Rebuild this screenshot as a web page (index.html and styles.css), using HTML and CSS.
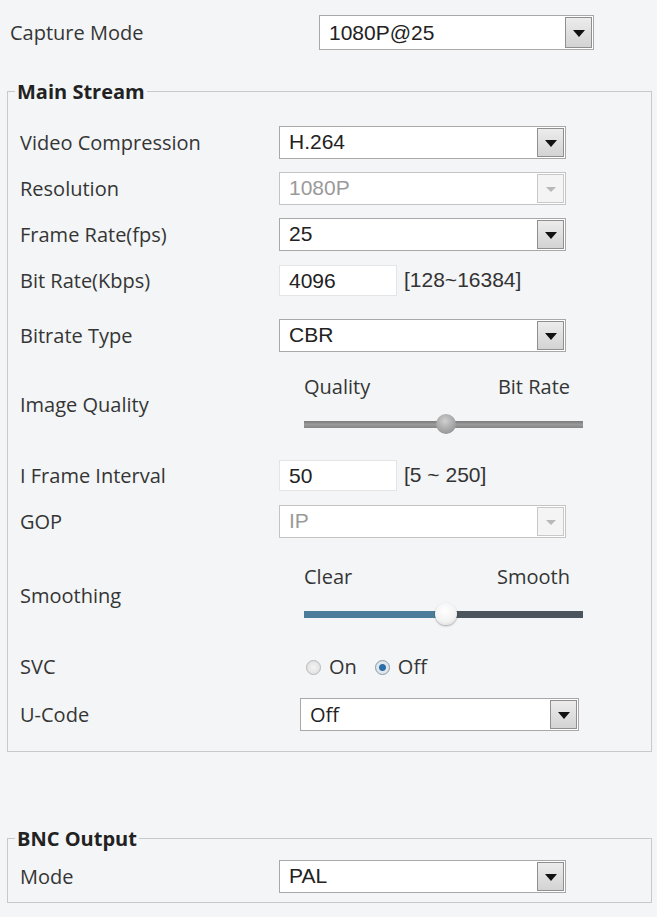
FILE: index.html
```html
<!DOCTYPE html>
<html lang="en">
<head>
<meta charset="UTF-8">
<title>Video Settings</title>
<link rel="stylesheet" href="styles.css">
</head>
<body>
<div class="page">
  <div class="row top">
    <span class="label">Capture Mode</span>
    <div class="select wide"><span class="val">1080P@25</span><span class="btn"><i class="tri"></i></span></div>
  </div>

  <fieldset class="group main">
    <legend>Main Stream</legend>

    <div class="row">
      <span class="label">Video Compression</span>
      <div class="select"><span class="val">H.264</span><span class="btn"><i class="tri"></i></span></div>
    </div>
    <div class="row">
      <span class="label">Resolution</span>
      <div class="select disabled"><span class="val">1080P</span><span class="btn"><i class="tri"></i></span></div>
    </div>
    <div class="row">
      <span class="label">Frame Rate(fps)</span>
      <div class="select"><span class="val">25</span><span class="btn"><i class="tri"></i></span></div>
    </div>
    <div class="row">
      <span class="label">Bit Rate(Kbps)</span>
      <div class="field"><span class="input">4096</span><span class="range">[128~16384]</span></div>
    </div>
    <div class="row gap">
      <span class="label">Bitrate Type</span>
      <div class="select"><span class="val">CBR</span><span class="btn"><i class="tri"></i></span></div>
    </div>
    <div class="row quality">
      <span class="label">Image Quality</span>
      <div class="slider">
        <div class="ends"><span>Quality</span><span>Bit Rate</span></div>
        <div class="track gray"><span class="knob"></span></div>
      </div>
    </div>
    <div class="row">
      <span class="label">I Frame Interval</span>
      <div class="field"><span class="input">50</span><span class="range">[5 ~ 250]</span></div>
    </div>
    <div class="row">
      <span class="label">GOP</span>
      <div class="select disabled"><span class="val">IP</span><span class="btn"><i class="tri"></i></span></div>
    </div>
    <div class="row smooth">
      <span class="label">Smoothing</span>
      <div class="slider">
        <div class="ends"><span>Clear</span><span>Smooth</span></div>
        <div class="track blue"><span class="fill"></span><span class="knob white"></span></div>
      </div>
    </div>
    <div class="row">
      <span class="label">SVC</span>
      <div class="radios">
        <span class="radio"></span><span class="opt">On</span>
        <span class="radio on"></span><span class="opt">Off</span>
      </div>
    </div>
    <div class="row ucode">
      <span class="label">U-Code</span>
      <div class="select shifted"><span class="val sans">Off</span><span class="btn"><i class="tri"></i></span></div>
    </div>
  </fieldset>

  <fieldset class="group bnc">
    <legend>BNC Output</legend>
    <div class="row">
      <span class="label">Mode</span>
      <div class="select"><span class="val">PAL</span><span class="btn"><i class="tri"></i></span></div>
    </div>
  </fieldset>
</div>
</body>
</html>
```

FILE: styles.css
```css
body {
  margin: 0;
  background: #f3f5f7;
  color: #353535;
  font-family: "Open Sans", "Noto Sans", sans-serif;
  font-size: 20px;
}
.page {
  padding: 15px 5px 0 7px;
}
.row {
  display: grid;
  grid-template-columns: 259px 1fr;
  align-items: center;
  height: 46px;
}
.row.top {
  grid-template-columns: 309px 1fr;
  height: 35px;
  padding-left: 3px;
}
.row.gap {
  margin-top: 9px;
}
.row.quality {
  height: 88px;
  margin: 2px 0 4px;
}
.row.smooth {
  height: 96px;
  margin-top: 3px;
}
.row.ucode {
  margin-top: 2px;
}
.label {
  white-space: nowrap;
}

/* boxes */
.group {
  margin: 0;
  border: 1px solid #c6cacd;
  padding: 14px 12px 14px 12px;
}
.group.main {
  margin-top: 28px;
}
.group.bnc {
  margin-top: 73px;
  padding-top: 1px;
  padding-bottom: 3px;
}
.group legend {
  font-weight: bold;
  color: #222;
  padding: 0 2px;
  margin-left: -5px;
  font-size: 20px;
}

/* selects */
.select {
  display: flex;
  width: 287px;
  height: 33px;
  box-sizing: border-box;
  border: 1px solid #a8a8a8;
  background: #fff;
  font-family: "Liberation Sans", Arial, sans-serif;
  font-size: 21px;
  color: #222;
}
.select.wide {
  width: 275px;
  height: 35px;
}
.select.shifted {
  width: 279px;
  margin-left: 21px;
}
.select .val {
  flex: 1;
  padding-left: 9px;
  align-self: center;
}
.select .val.sans {
  font-family: "Open Sans", sans-serif;
  font-size: 20px;
}
.select .btn {
  width: 27px;
  margin: 1px;
  box-sizing: border-box;
  border: 1px solid #8f8f8f;
  background: linear-gradient(#ececec, #d3d3d3);
  display: flex;
  align-items: center;
  justify-content: center;
}
.tri {
  width: 0;
  height: 0;
  border-left: 6px solid transparent;
  border-right: 6px solid transparent;
  border-top: 7px solid #111;
  margin-top: 2px;
}
.select.disabled {
  color: #9a9a9a;
  border-color: #c4c4c4;
}
.select.disabled .btn {
  border-color: #c8c8c8;
  background: #f4f4f4;
}
.select.disabled .tri {
  border-top-color: #b8b8b8;
  border-left-width: 5px;
  border-right-width: 5px;
  border-top-width: 5px;
}

/* text inputs */
.field {
  display: flex;
  align-items: center;
  gap: 7px;
}
.input {
  width: 118px;
  height: 31px;
  box-sizing: border-box;
  background: #fff;
  border: 1px solid #e2e4e6;
  padding-left: 9px;
  line-height: 29px;
  font-family: "Liberation Sans", Arial, sans-serif;
  font-size: 21px;
  color: #222;
}
.range {
  font-family: "Liberation Sans", Arial, sans-serif;
  font-size: 21px;
  color: #333;
}

/* sliders */
.slider {
  width: 279px;
  margin-left: 25px;
  align-self: start;
  padding-top: 15px;
}
.row.smooth .slider {
  padding-top: 18px;
}
.ends {
  display: flex;
  justify-content: space-between;
  padding-right: 13px;
  height: 24px;
  line-height: 24px;
}
.track {
  position: relative;
  height: 7px;
  margin-top: 22px;
}
.track.gray {
  background: linear-gradient(#7a7a7a, #9a9a9a 50%, #858585);
}
.track.blue {
  background: #4a555e;
}
.track .fill {
  display: block;
  width: 142px;
  height: 100%;
  background: #4b7c99;
}
.knob {
  position: absolute;
  left: 132px;
  top: -7px;
  width: 20px;
  height: 20px;
  border-radius: 50%;
  background: radial-gradient(circle at 45% 35%, #cfcfcf, #9b9b9b 70%, #7c7c7c);
}
.knob.white {
  left: 131px;
  top: -8px;
  width: 22px;
  height: 22px;
  background: radial-gradient(circle at 45% 35%, #ffffff, #f2f2f2 60%, #cfcfcf);
  box-shadow: 0 1px 2px rgba(0, 0, 0, 0.35);
}

/* radios */
.radios {
  display: flex;
  align-items: center;
  padding-left: 27px;
}
.radio {
  width: 13px;
  height: 13px;
  border-radius: 50%;
  border: 1px solid #b8b8b8;
  background: radial-gradient(#f4f4f4, #dcdcdc);
  margin: 3px 8px 0 0;
}
.radio.on {
  border-color: #8a98a6;
  background: radial-gradient(#2a6da8 0 3px, #dfe6ec 4px);
}
.opt {
  margin-right: 18px;
}
```
